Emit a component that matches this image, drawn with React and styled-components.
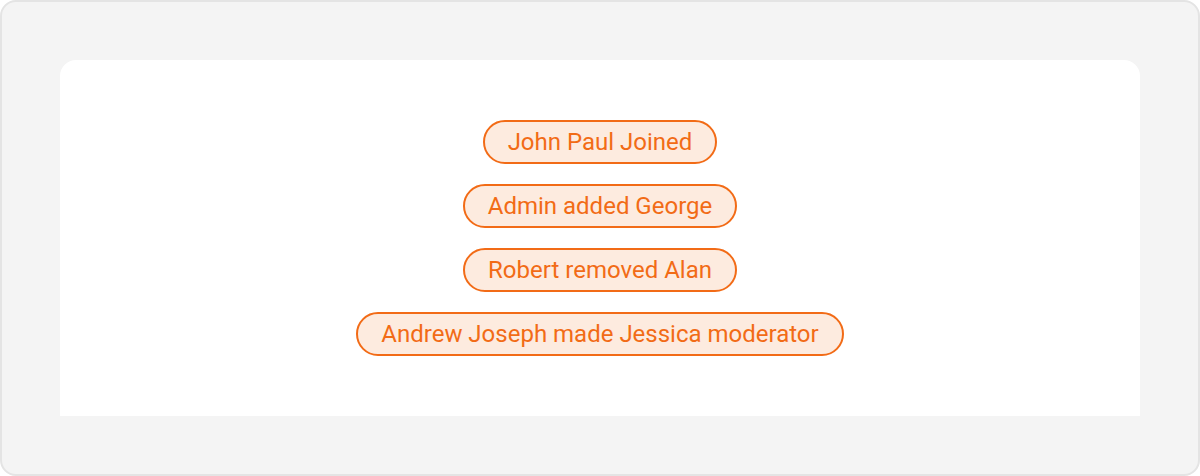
import React from 'react';
import styled, { createGlobalStyle } from 'styled-components';

const GlobalStyle = createGlobalStyle`
  html, body {
    margin: 0;
    padding: 0;
    background: #ffffff;
  }
  * { box-sizing: border-box; }
`;

const Frame = styled.div`
  width: 1200px;
  height: 476px;
  background: #f4f4f4;
  border: 2px solid #e4e4e4;
  border-radius: 16px;
  padding: 58px 58px 58px 58px;
  font-family: Roboto, "Liberation Sans", sans-serif;
`;

const Panel = styled.div`
  background: #ffffff;
  border-radius: 16px 16px 0 0;
  padding: 60px 0;
  display: flex;
  flex-direction: column;
  align-items: center;
  gap: 20px;
`;

const Chip = styled.div`
  height: 44px;
  padding: 0 23px;
  display: flex;
  align-items: center;
  border: 2px solid #f26b16;
  border-radius: 22px;
  background: #fdebdf;
  color: #f26b16;
  font-size: 24px;
  line-height: 1;
`;

const events = [
  'John Paul Joined',
  'Admin added George',
  'Robert removed Alan',
  'Andrew Joseph made Jessica moderator',
];

export default function App() {
  return (
    <>
      <GlobalStyle />
      <Frame>
        <Panel>
          {events.map((text) => (
            <Chip key={text}>{text}</Chip>
          ))}
        </Panel>
      </Frame>
    </>
  );
}
